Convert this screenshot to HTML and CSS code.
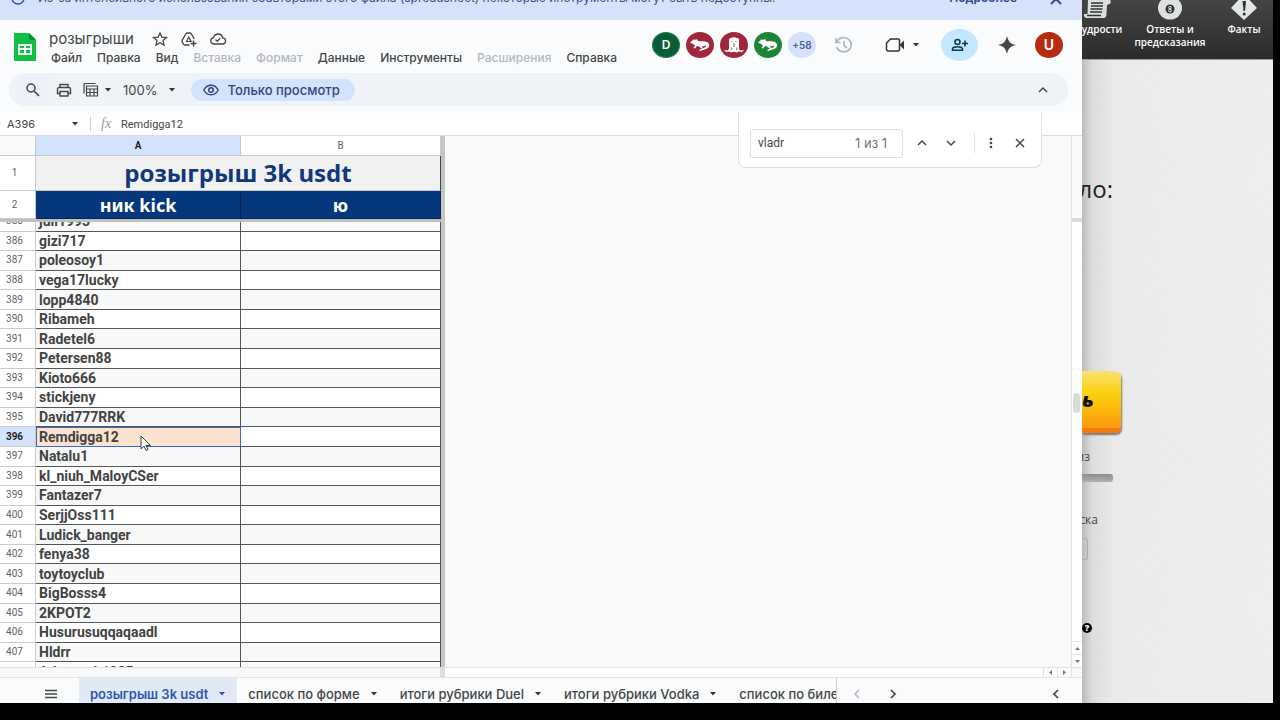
FILE: index.html
```html
<!DOCTYPE html>
<html lang="ru">
<head>
    <meta charset="UTF-8">
    <title>розыгрыши</title>
    <link rel="stylesheet" href="styles.css">
</head>
<body>
<div class="screen">
    <main class="sheet">
        <!-- баннер -->
        <div class="banner">
            <svg class="banner-icon" width="16" height="16" viewBox="0 0 16 16"><circle cx="8" cy="8" r="6" fill="none" stroke="#2c54a8" stroke-width="1.5"/></svg>
            <span class="banner-text">Из-за интенсивного использования соавторами этого файла (spreadsheet) некоторые инструменты могут быть недоступны.</span>
            <a class="banner-link" href="#">Подробнее</a>
            <button class="banner-close" aria-label="Закрыть"><svg width="14" height="14" viewBox="0 0 14 14"><path d="M2 2l10 10M12 2L2 12" stroke="#2c4a85" stroke-width="2"/></svg></button>
        </div>

        <!-- шапка -->
        <header class="head">
            <svg class="logo" width="24" height="30" viewBox="0 0 24 30">
                <path d="M2 1h14l7 7v20a1 1 0 0 1-1 1H2a1 1 0 0 1-1-1V2a1 1 0 0 1 1-1z" fill="#12bf46"/>
                <path d="M16 1l7 7h-5a2 2 0 0 1-2-2z" fill="#0a8a35"/>
                <path d="M5 12h14v11H5zM7 14v2h4v-2zM13 14v2h4v-2zM7 18v3h4v-3zM13 18v3h4v-3z" fill="#eafff0" fill-rule="evenodd"/>
            </svg>
            <div class="titles">
                <div class="title-row">
                    <h1 class="doc-name">розыгрыши</h1>
                    <button class="icon" aria-label="Пометить"><svg width="18" height="16" viewBox="0 0 18 16"><path d="M9 2l1.900 4.200 4.600.4-3.500 3 1.100 4.500L9 11.700l-4.100 2.400L6 9.600l-3.500-3 4.600-.4z" fill="none" stroke="#444746" stroke-width="1.300"/></svg></button>
                    <button class="icon" aria-label="Переместить"><svg width="18" height="16" viewBox="0 0 18 16"><path d="M9.500 14H5a2 2 0 0 1-1.700-1L2.200 11a2 2 0 0 1 0-1.800L5.800 3a2 2 0 0 1 1.700-1h2.200a2 2 0 0 1 1.700 1l2.800 5" fill="none" stroke="#444746" stroke-width="1.400"/><path d="M8.800 6l-2.300 4.500h4.600z" fill="none" stroke="#444746" stroke-width="1.200"/><path d="M13.500 9.500v6M10.500 12.500h6" stroke="#444746" stroke-width="1.400"/></svg></button>
                    <button class="icon" aria-label="Сохранено"><svg width="18" height="16" viewBox="0 0 18 16"><path d="M5 13a3.500 3.200 0 0 1-.5-6.300C5.200 4.300 7 3 9 3c2.500 0 4.300 1.700 4.600 3.900A3 3 0 0 1 13.500 13z" fill="none" stroke="#444746" stroke-width="1.300"/><path d="M6.500 8.500l1.800 1.800 3-3.300" fill="none" stroke="#444746" stroke-width="1.200"/></svg></button>
                </div>
                <nav class="menu">
                    <button>Файл</button>
                    <button>Правка</button>
                    <button>Вид</button>
                    <button disabled>Вставка</button>
                    <button disabled>Формат</button>
                    <button>Данные</button>
                    <button>Инструменты</button>
                    <button disabled>Расширения</button>
                    <button>Справка</button>
                </nav>
            </div>
            <div class="people">
                <span class="avatar dark-green">D</span>
                <span class="avatar red"><svg width="20" height="14" viewBox="0 0 20 14"><path d="M0 4.500l2-1.500 1-1.500 2 .3 2-.5 1.500 2C12 3.500 17 2.500 19 6c1 3-1.500 5-4.500 5.500L10 13l-1-1 4.500-2c2-.7 3-1.500 2.500-2.200-1.500-.6-3 .7-4.500.7L13 10l-1.500.5L9 8.500 7 8l-2 2.500-1.500-.5L5 7.500 3 6z" fill="#fff"/></svg></span>
                <span class="avatar red"><svg width="22" height="18" viewBox="0 0 22 18"><path d="M6 13V5C5.500 3 6.500 2 8 2c2-1 4-1 6 0 1.500 0 2.500 1 2 3v8l1.500 1.500L21 14l-2 2-3-.5-2 1-3-.8-3 .8-2-1-3 .5-2-2 3.500.5z" fill="#fff"/><path d="M8.500 5.500h1M12.500 5.500h1M10 8h2M10 10h2M8.500 11.500L8 14M13.500 11.500l.5 2.500" stroke="#a0283a" stroke-width=".8"/></svg></span>
                <span class="avatar green"><svg width="20" height="14" viewBox="0 0 20 14"><path d="M0 4.500l2-1.500 1-1.500 2 .3 2-.5 1.500 2C12 3.500 17 2.500 19 6c1 3-1.500 5-4.500 5.500L10 13l-1-1 4.500-2c2-.7 3-1.500 2.500-2.200-1.500-.6-3 .7-4.500.7L13 10l-1.500.5L9 8.500 7 8l-2 2.500-1.500-.5L5 7.500 3 6z" fill="#fff"/></svg></span>
                <span class="avatar more">+58</span>
            </div>
            <div class="actions">
                <button class="icon" aria-label="История"><svg width="20" height="18" viewBox="0 0 20 18"><path d="M3 5.500A7.500 7.200 0 1 1 2.600 11M2 2v4.500h4.500" fill="none" stroke="#b4b7ba" stroke-width="1.700"/><path d="M10 5v4.500l3 2.500" fill="none" stroke="#b4b7ba" stroke-width="1.700"/></svg></button>
                <button class="icon meet" aria-label="Встреча"><svg width="20" height="16" viewBox="0 0 20 16"><path d="M5.500 2H13a1.500 1.500 0 0 1 1.500 1.500v9A1.500 1.500 0 0 1 13 14H3a1.500 1.500 0 0 1-1.500-1.500V6z" fill="none" stroke="#333" stroke-width="1.500"/><path d="M14.500 8L19 3.500v9z" fill="#333"/></svg><svg width="6" height="4" viewBox="0 0 6 4"><path d="M0 0h6L3 3.500z" fill="#333"/></svg></button>
                <button class="share" aria-label="Поделиться"><svg width="18" height="14" viewBox="0 0 18 14"><circle cx="6.500" cy="4" r="2.500" fill="none" stroke="#123a52" stroke-width="1.600"/><path d="M1.500 12.200v-1c0-1.700 2.500-2.500 5-2.500s5 .8 5 2.500v1z" fill="none" stroke="#123a52" stroke-width="1.600"/><path d="M14 2.500v6M11 5.500h6" stroke="#123a52" stroke-width="1.600"/></svg></button>
                <button class="icon" aria-label="Gemini"><svg width="20" height="18" viewBox="0 0 20 18"><path d="M10 0c1.300 5.500 3.500 8 9 9-5.500 1-7.700 3.500-9 9-1.300-5.500-3.500-8-9-9 5.500-1 7.700-3.500 9-9z" fill="#444746"/></svg></button>
                <button class="avatar account">U</button>
            </div>
        </header>

        <!-- панель инструментов -->
        <div class="toolbar">
            <button class="icon find-btn" aria-label="Поиск"><svg width="16" height="16" viewBox="0 0 16 16"><circle cx="6" cy="6" r="4" fill="none" stroke="#444746" stroke-width="1.500"/><path d="M9 9l5 5" stroke="#444746" stroke-width="1.700"/></svg></button>
            <button class="icon" aria-label="Печать"><svg width="16" height="14" viewBox="0 0 16 14"><path d="M4 4.500V1.500h8v3M4 10.500H1.500V6a1.500 1.500 0 0 1 1.500-1.500h10A1.500 1.500 0 0 1 14.500 6v4.500H12M4 8.500h8v4.500H4z" fill="none" stroke="#444746" stroke-width="1.400"/></svg></button>
            <button class="icon filter" aria-label="Фильтры"><svg width="16" height="14" viewBox="0 0 16 14"><path d="M1 10.500V1.500a1 1 0 0 1 1-1h10.500" fill="none" stroke="#444746" stroke-width="1.200"/><path d="M3.500 3h11v10h-11zM3.500 6h11M3.500 9.500h11M7 6v7M11 6v7" fill="none" stroke="#444746" stroke-width="1.200"/></svg><svg width="6" height="4" viewBox="0 0 6 4"><path d="M0 0h6L3 3.500z" fill="#333"/></svg></button>
            <button class="zoom">100%<svg width="6" height="4" viewBox="0 0 6 4"><path d="M0 0h6L3 3.500z" fill="#333"/></svg></button>
            <button class="view-only"><svg width="16" height="12" viewBox="0 0 16 12"><path d="M.8 6C2.500 2.800 5 1.200 8 1.200S13.500 2.800 15.200 6C13.500 9.200 11 10.800 8 10.800S2.500 9.200.8 6z" fill="none" stroke="#2f4778" stroke-width="1.400"/><circle cx="8" cy="6" r="2.300" fill="none" stroke="#2f4778" stroke-width="1.500"/></svg>Только просмотр</button>
            <button class="icon collapse" aria-label="Скрыть меню"><svg width="10" height="8" viewBox="0 0 10 8"><path d="M1 6l4-4 4 4" fill="none" stroke="#444746" stroke-width="1.500"/></svg></button>
        </div>

        <!-- строка формул -->
        <div class="formula">
            <button class="name-box">A396<svg width="6" height="4" viewBox="0 0 6 4"><path d="M0 0h6L3 3.500z" fill="#333"/></svg></button>
            <i class="fx">fx</i>
            <input class="formula-input" aria-label="Строка формул" value="Remdigga12">
        </div>

        <!-- таблица -->
        <div class="grid">
            <div class="cells">
                <table class="frozen">
                    <colgroup><col class="c-num"><col class="c-a"><col class="c-b"></colgroup>
                    <tr class="letters"><th></th><th class="active">A</th><th>B</th></tr>
                    <tr class="r-title"><th>1</th><td colspan="2">розыгрыш 3k usdt</td></tr>
                    <tr class="r-names"><th>2</th><td>ник kick</td><td>ю</td></tr>
                </table>
                <div class="scroll">
                    <table class="data">
                        <colgroup><col class="c-num"><col class="c-a"><col class="c-b"></colgroup>
                        <tr><th>385</th><td>juli1993</td><td></td></tr>
                        <tr><th>386</th><td>gizi717</td><td></td></tr>
                        <tr><th>387</th><td>poleosoy1</td><td></td></tr>
                        <tr><th>388</th><td>vega17lucky</td><td></td></tr>
                        <tr><th>389</th><td>lopp4840</td><td></td></tr>
                        <tr><th>390</th><td>Ribameh</td><td></td></tr>
                        <tr><th>391</th><td>Radetel6</td><td></td></tr>
                        <tr><th>392</th><td>Petersen88</td><td></td></tr>
                        <tr><th>393</th><td>Kioto666</td><td></td></tr>
                        <tr><th>394</th><td>stickjeny</td><td></td></tr>
                        <tr><th>395</th><td>David777RRK</td><td></td></tr>
                        <tr class="current"><th>396</th><td>Remdigga12</td><td></td></tr>
                        <tr><th>397</th><td>Natalu1</td><td></td></tr>
                        <tr><th>398</th><td>kl_niuh_MaloyCSer</td><td></td></tr>
                        <tr><th>399</th><td>Fantazer7</td><td></td></tr>
                        <tr><th>400</th><td>SerjjOss111</td><td></td></tr>
                        <tr><th>401</th><td>Ludick_banger</td><td></td></tr>
                        <tr><th>402</th><td>fenya38</td><td></td></tr>
                        <tr><th>403</th><td>toytoyclub</td><td></td></tr>
                        <tr><th>404</th><td>BigBosss4</td><td></td></tr>
                        <tr><th>405</th><td>2KPOT2</td><td></td></tr>
                        <tr><th>406</th><td>Husurusuqqaqaadl</td><td></td></tr>
                        <tr><th>407</th><td>Hldrr</td><td></td></tr>
                        <tr><th>408</th><td>Advoznab1985</td><td></td></tr>
                    </table>
                </div>
            </div>
            <div class="blank"></div>
            <div class="vscroll">
                <div class="vscroll-top"></div>
                <div class="vscroll-track"><div class="thumb"></div></div>
                <button aria-label="Вверх"><svg width="5" height="3" viewBox="0 0 5 3"><path d="M0 3h5L2.500 0z" fill="#777"/></svg></button>
                <button aria-label="Вниз"><svg width="5" height="3" viewBox="0 0 5 3"><path d="M0 0h5L2.500 3z" fill="#777"/></svg></button>
            </div>
        </div>
        <div class="hscroll">
            <div class="hscroll-left"></div>
            <button aria-label="Влево"><svg width="3" height="5" viewBox="0 0 3 5"><path d="M3 0v5L0 2.500z" fill="#777"/></svg></button>
            <button aria-label="Вправо"><svg width="3" height="5" viewBox="0 0 3 5"><path d="M0 0v5l3-2.500z" fill="#777"/></svg></button>
            <div class="corner"></div>
        </div>

        <!-- листы -->
        <footer class="tabs">
            <button class="icon all" aria-label="Все листы"><svg width="14" height="10" viewBox="0 0 14 10"><path d="M1 1.500h12M1 5h12M1 8.500h12" stroke="#444746" stroke-width="1.300"/></svg></button>
            <div class="tab-list">
                <button class="tab on">розыгрыш 3k usdt<svg width="6" height="4" viewBox="0 0 6 4"><path d="M0 0h6L3 3.500z" fill="#2f55ab"/></svg></button>
                <button class="tab">список по форме<svg width="6" height="4" viewBox="0 0 6 4"><path d="M0 0h6L3 3.500z" fill="#333"/></svg></button>
                <button class="tab">итоги рубрики Duel<svg width="6" height="4" viewBox="0 0 6 4"><path d="M0 0h6L3 3.500z" fill="#333"/></svg></button>
                <button class="tab">итоги рубрики Vodka<svg width="6" height="4" viewBox="0 0 6 4"><path d="M0 0h6L3 3.500z" fill="#333"/></svg></button>
                <button class="tab">список по билетам</button>
            </div>
            <div class="tab-nav">
                <button class="icon" aria-label="Назад"><svg width="8" height="10" viewBox="0 0 8 10"><path d="M6 1L2 5l4 4" fill="none" stroke="#b4b7ba" stroke-width="1.500"/></svg></button>
                <button class="icon" aria-label="Вперёд"><svg width="8" height="10" viewBox="0 0 8 10"><path d="M2 1l4 4-4 4" fill="none" stroke="#444746" stroke-width="1.700"/></svg></button>
            </div>
            <button class="icon panel" aria-label="Боковая панель"><svg width="8" height="10" viewBox="0 0 8 10"><path d="M6 1L2 5l4 4" fill="none" stroke="#444746" stroke-width="1.700"/></svg></button>
        </footer>

        <!-- поиск по листу -->
        <form class="find">
            <label class="find-field">
                <input aria-label="Найти на листе" value="vladr">
                <span>1 из 1</span>
            </label>
            <button type="button" aria-label="Предыдущее"><svg width="10" height="8" viewBox="0 0 10 8"><path d="M1 6l4-4 4 4" fill="none" stroke="#444746" stroke-width="1.500"/></svg></button>
            <button type="button" aria-label="Следующее"><svg width="10" height="8" viewBox="0 0 10 8"><path d="M1 2l4 4 4-4" fill="none" stroke="#444746" stroke-width="1.500"/></svg></button>
            <span class="line"></span>
            <button type="button" aria-label="Ещё"><svg width="4" height="12" viewBox="0 0 4 12"><g fill="#444746"><circle cx="2" cy="2" r="1.300"/><circle cx="2" cy="6" r="1.300"/><circle cx="2" cy="10" r="1.300"/></g></svg></button>
            <button type="button" aria-label="Закрыть поиск"><svg width="10" height="10" viewBox="0 0 10 10"><path d="M1 1l8 8M9 1L1 9" stroke="#444746" stroke-width="1.500"/></svg></button>
        </form>

        <svg class="cursor" width="12" height="18" viewBox="0 0 12 18"><path d="M1 1v13l3-3 2 4.500 2-1L6 10.500h4.500z" fill="#fff" stroke="#444"/></svg>
    </main>

    <!-- окно позади -->
    <aside class="side">
        <nav class="side-nav">
            <a class="wisdom" href="#"><svg width="28" height="20" viewBox="0 0 28 20"><path d="M5-1h19c3-1 4 1 3.500 4.500L24 5l-.5 9c0 2.500-1 4-3 4H4c-2.500 0-3.500-2-3-4h3.500z" fill="#d9dede"/><path d="M8 3h12M8 6h12M7.500 9h12M7 12h12M4 15.500h14" stroke="#333" stroke-width="1.300"/></svg><span>удрости</span></a>
            <a class="answers" href="#"><svg width="24" height="20" viewBox="0 0 24 20"><ellipse cx="12" cy="8" rx="12" ry="11.500" fill="#dde1e1"/><circle cx="12" cy="9" r="4.500" fill="#333"/><circle cx="12" cy="7.700" r="1.300" fill="none" stroke="#eee"/><circle cx="12" cy="10.500" r="1.400" fill="none" stroke="#eee"/></svg><span>Ответы и предсказания</span></a>
            <a class="facts" href="#"><svg width="28" height="20" viewBox="0 0 28 20"><path d="M14-6l13 14-13 12L1 8z" fill="#e3e6e6"/><path d="M12.500 1h3.500l-1 10h-1.500z" fill="#333"/><circle cx="14.200" cy="14" r="1.500" fill="#333"/></svg><span>Факты</span></a>
        </nav>
        <div class="side-body">
            <h2 class="number">ло:</h2>
            <button class="go">ь</button>
            <label class="word" for="range">из</label>
            <input class="bar" id="range" readonly>
            <label class="word list" for="box">ска</label>
            <input class="box" id="box">
            <span class="help">?</span>
        </div>
    </aside>
</div>
</body>
</html>
```

FILE: styles.css
```css
*{
    box-sizing: border-box;
}
body{
    margin: 0;
    background: #000;
    color: #444746;
    font-family: Inter, "Noto Sans", sans-serif;
}
button{
    display: flex;
    align-items: center;
    justify-content: center;
    padding: 0;
    border: 0;
    background: none;
    color: inherit;
    font: inherit;
    white-space: nowrap;
}
input{
    border: 0;
    padding: 0;
    min-width: 0;
    background: none;
    color: inherit;
    font: inherit;
}
svg{
    flex: none;
}
.screen{
    display: flex;
    height: 100vh;
    padding: 0 7px 17px 0;
    overflow: hidden;
}
.sheet{
    position: relative;
    flex: 1;
    min-width: 0;
    display: flex;
    flex-direction: column;
    background: #f9fbfd;
}

/* баннер прокручен вверх */
.banner{
    display: flex;
    align-items: flex-end;
    height: 20px;
    padding: 0 19px 14px 10px;
    overflow: hidden;
    background: #d6e2fc;
    color: #3c5288;
    font-size: 12px;
    line-height: 16px;
}
.banner-text{
    flex: 1;
    margin-left: 12px;
    white-space: nowrap;
}
.banner-link{
    margin-right: 32px;
    color: #2c4a85;
    font-weight: 600;
    text-decoration: none;
}

/* шапка */
.head{
    display: flex;
    align-items: center;
    height: 53px;
    padding: 0 19px 4px 13px;
}
.logo{
    margin-top: 4px;
}
.titles{
    flex: 1;
    margin: 6px 0 0 12px;
}
.title-row{
    display: flex;
    align-items: center;
    gap: 11px;
    height: 20px;
}
.doc-name{
    margin: 0 6px 0 0;
    font-size: 15px;
    font-weight: 400;
    line-height: 20px;
}
.menu{
    display: flex;
    gap: 15px;
    padding-left: 2px;
    font-size: 12px;
    font-weight: 500;
    line-height: 18px;
}
.menu button:disabled{
    color: #b4b7ba;
}
.people{
    display: flex;
    gap: 6px;
}
.avatar{
    display: flex;
    align-items: center;
    justify-content: center;
    width: 28px;
    height: 26px;
    border-radius: 50%;
    color: #fff;
    font-size: 12px;
    font-weight: 600;
}
.dark-green{
    background: #0b5c38;
    border: 1px solid #1d8546;
}
.red{
    background: #a0283a;
}
.green{
    background: #1e8537;
}
.more{
    background: #d6e2fc;
    color: #4a5f93;
    font-size: 10px;
}
.actions{
    display: flex;
    align-items: center;
    gap: 18px;
    margin-left: 18px;
}
.meet{
    gap: 8px;
    margin-left: 13px;
}
.share{
    width: 37px;
    height: 32px;
    margin: 0 1px 0 4px;
    border-radius: 50%;
    background: #c2e7ff;
}
.account{
    background: #b52c10;
    font-size: 14px;
}

/* панель инструментов */
.toolbar{
    display: flex;
    align-items: center;
    gap: 10px;
    height: 33px;
    margin: 0 14px 7px 9px;
    padding: 0 20px 0 7px;
    border-radius: 16px;
    background: #eff3f8;
    font-size: 12px;
}
.find-btn{
    width: 34px;
    height: 28px;
    border-radius: 4px;
    background: #edf0f7;
}
.toolbar .icon + .icon{
    margin-left: -4px;
}
.toolbar .icon + .filter{
    gap: 6px;
    margin-left: 1px;
}
.zoom{
    gap: 12px;
    margin-left: 2px;
    font-size: 13px;
}
.view-only{
    gap: 8px;
    height: 22px;
    margin-left: 6px;
    padding: 0 15px 0 12px;
    border-radius: 11px;
    background: #d3e3fd;
    color: #2f4778;
    font-size: 13px;
    font-weight: 500;
}
.toolbar .collapse{
    margin-left: auto;
}

/* строка формул */
.formula{
    display: flex;
    align-items: center;
    height: 22px;
    background: #fff;
    font-size: 11px;
}
.name-box{
    justify-content: space-between;
    width: 91px;
    height: 14px;
    padding: 0 12px 0 7px;
    border-right: 1px solid #ccc;
}
.fx{
    width: 30px;
    padding-left: 10px;
    color: #999;
    font-family: "Liberation Serif", serif;
    font-size: 14px;
}
.formula-input{
    flex: 1;
    font-family: Roboto, sans-serif;
}

/* таблица */
.grid{
    flex: 1;
    min-height: 0;
    display: flex;
    border-top: 1px solid #d9dbdc;
}
.cells{
    display: flex;
    flex-direction: column;
    width: 445px;
    border-right: 4px solid #c4c5c6;
}
table{
    width: 441px;
    table-layout: fixed;
    border-spacing: 0;
}
.c-num{
    width: 36px;
}
.c-a{
    width: 205px;
}
th,
td{
    padding: 0;
    border-right: 1px solid #c8cacb;
    border-bottom: 1px solid #c8cacb;
}
th{
    color: #5f6368;
    font: 400 10px/12px Roboto, sans-serif;
    background: #fff;
}
th:first-child{
    padding-right: 6px;
}
.frozen{
    border-bottom: 3px solid #c0c0c0;
}
.letters th{
    height: 20px;
}
.letters th:first-child{
    background: #f8f9fa;
}
.letters .active{
    background: #d3e3fd;
    color: #222;
    font-weight: 700;
}
.r-title td{
    height: 35px;
    background: #f1f1f1;
    border-right-color: #444;
    color: #10397c;
    font: bold 24px/30px "Noto Sans", sans-serif;
    text-align: center;
}
.r-names td{
    height: 28px;
    background: #05377c;
    border-color: #0a2450;
    color: #fff;
    font: bold 18px/24px "Noto Sans", sans-serif;
    text-align: center;
}
.scroll{
    flex: 1;
    overflow: hidden;
}
/* список прокручен до середины строки 385 */
.data{
    height: 470px;
    margin-top: -10px;
}
.data td{
    padding-left: 3px;
    border-color: #555;
    color: #434343;
    font: bold 14px/16px Roboto, sans-serif;
}
.data tr:nth-child(odd) td{
    background: #f7f9f9;
}
.data tr:nth-child(even) td{
    background: #fff;
}
.data .current th{
    background: #d3e3fd;
    color: #222;
    font-weight: 700;
}
.data .current td:nth-child(2){
    background: #fbe3cf;
    box-shadow: inset 1px 1px 0 #3c66cc;
    border-color: #3c66cc;
}
.blank{
    flex: 1;
    background: #f8faf7;
}
.vscroll{
    display: flex;
    flex-direction: column;
    width: 11px;
    border-left: 1px solid #dfe1e2;
    background: #fff;
}
.vscroll-top{
    height: 86px;
    background: #f9f9fa;
    border-bottom: 4px solid #d9dadb;
}
.vscroll-track{
    flex: 1;
    padding: 171px 2px 0 1px;
}
.thumb{
    height: 20px;
    border-radius: 4px;
    background: #d9dadc;
}
.vscroll button{
    height: 13px;
    border-top: 1px solid #dfe1e2;
}
.hscroll{
    display: flex;
    height: 11px;
    border-top: 1px solid #e2e4e5;
    border-bottom: 1px solid #e2e4e5;
    background: #fff;
}
.hscroll-left{
    width: 445px;
    margin-right: auto;
    background: #f9f9fa;
    border-right: 5px solid #dcddde;
}
.hscroll button{
    width: 14px;
    border-left: 1px solid #dfe1e2;
}
.corner{
    width: 11px;
    border-left: 1px solid #dfe1e2;
    background: #f9f9fa;
}

/* листы */
.tabs{
    display: flex;
    align-items: flex-start;
    height: 25px;
    overflow: hidden;
    font-size: 13px;
    font-weight: 500;
}
.tabs button{
    height: 32px;
}
.all{
    width: 79px;
    padding-left: 22px;
}
.tab-list{
    display: flex;
    width: 758px;
    overflow: hidden;
    border-right: 1px solid #ccc;
}
.tab{
    flex: none;
    gap: 11px;
    padding: 0 12px 0 11px;
}
.tab.on{
    background: #e1e9f7;
    color: #2f55ab;
    font-weight: 600;
}
.tab-nav{
    display: flex;
    gap: 28px;
    margin-left: 16px;
}
.panel{
    margin: 0 22px 0 auto;
}

/* поиск */
.find{
    position: absolute;
    top: 112px;
    right: 40px;
    display: flex;
    align-items: center;
    width: 304px;
    height: 56px;
    padding: 7px 6px 0 11px;
    border: 1px solid #dddfe1;
    border-top: 0;
    border-radius: 0 0 8px 8px;
    background: #fff;
}
.find-field{
    display: flex;
    align-items: center;
    width: 153px;
    height: 29px;
    margin-right: 4px;
    padding: 0 15px 0 7px;
    border: 1px solid #dcdee0;
    border-radius: 3px;
    font-size: 13px;
}
.find-field input{
    flex: 1;
    font: 12px Roboto, sans-serif;
}
.find-field span{
    color: #70757a;
}
.find button{
    width: 30px;
    height: 28px;
}
.find .line{
    width: 1px;
    height: 20px;
    margin: 0 2px 0 8px;
    background: #dcdee0;
}
.cursor{
    position: absolute;
    top: 435px;
    left: 140px;
}

/* окно позади */
.side{
    display: flex;
    flex-direction: column;
    width: 191px;
    overflow: hidden;
    background:
        repeating-linear-gradient(45deg, rgba(0,0,0,.01) 0 1px, transparent 1px 3px),
        repeating-linear-gradient(-45deg, rgba(0,0,0,.01) 0 1px, transparent 1px 3px),
        linear-gradient(90deg, #bcbcbc 0, #dedede 10px, #ececec 32px, #efefef 100%);
    color: #444;
    font-family: "Open Sans", sans-serif;
}
.side-nav{
    display: flex;
    height: 60px;
    background: linear-gradient(#444, #2b2b2b);
    border-bottom: 1px solid #999;
}
.side-nav a{
    display: flex;
    flex-direction: column;
    align-items: center;
    flex: none;
    color: #fff;
    font-size: 10px;
    font-weight: 600;
    line-height: 13px;
    text-align: center;
    text-decoration: none;
}
.side-nav span{
    margin-top: 3px;
}
.wisdom{
    width: 40px;
}
.wisdom svg{
    margin-right: 10px;
}
.answers{
    width: 96px;
}
.facts{
    width: 52px;
}
.side-body{
    display: flex;
    flex-direction: column;
    align-items: flex-start;
}
.number{
    display: flex;
    justify-content: flex-end;
    width: 31px;
    margin: 112px 0 0;
    overflow: hidden;
    color: #222;
    font-size: 24px;
    font-weight: 400;
    line-height: 34px;
}
.go{
    justify-content: flex-start;
    width: 39px;
    height: 62px;
    margin-top: 165px;
    border-radius: 0 6px 6px 0;
    border-bottom: 5px solid #f47c0c;
    background: linear-gradient(#fbe272, #fbd00c 40%, #fb9a10);
    box-shadow: 1px 2px 2px #777;
    color: #111;
    font-size: 20px;
    font-style: italic;
    font-weight: 800;
}
.word{
    display: flex;
    justify-content: flex-end;
    width: 8px;
    margin-top: 15px;
    overflow: hidden;
    font-size: 12px;
    line-height: 18px;
}
.bar{
    width: 31px;
    height: 8px;
    margin-top: 8px;
    border-radius: 0 3px 3px 0;
    background: linear-gradient(#8d8d8d, #b0b0b0);
}
.list{
    width: 16px;
    margin-top: 29px;
}
.box{
    width: 6px;
    height: 22px;
    margin-top: 9px;
    border: 1px solid #aaa;
    border-left: 0;
    border-radius: 0 3px 3px 0;
}
.help{
    width: 10px;
    height: 10px;
    margin-top: 63px;
    border-radius: 50%;
    background: #000;
    color: #fff;
    font-size: 9px;
    font-weight: 800;
    line-height: 10px;
    text-align: center;
}
```
